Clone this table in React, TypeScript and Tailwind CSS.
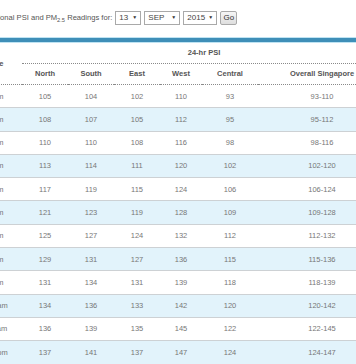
import React from "react";

const rows: [string, number, number, number, number, number][] = [
  ["1am", 105, 104, 102, 110, 93],
  ["2am", 108, 107, 105, 112, 95],
  ["3am", 110, 110, 108, 116, 98],
  ["4am", 113, 114, 111, 120, 102],
  ["5am", 117, 119, 115, 124, 106],
  ["6am", 121, 123, 119, 128, 109],
  ["7am", 125, 127, 124, 132, 112],
  ["8am", 129, 131, 127, 136, 115],
  ["9am", 131, 134, 131, 139, 118],
  ["10am", 134, 136, 133, 142, 120],
  ["11am", 136, 139, 135, 145, 122],
  ["12pm", 137, 141, 137, 147, 124],
];

const cols = "grid grid-cols-[62px_46px_46px_46px_42px_56px_128px]";

function SelectBox({ label, w }: { label: string; w: string }) {
  return (
    <div
      className={`${w} h-[14px] border border-[#a9a9a9] bg-white flex items-center justify-between pl-[3px] pr-[3px] text-[8px] text-[#444]`}
    >
      <span>{label}</span>
      <span className="text-[5px] text-[#333]">▼</span>
    </div>
  );
}

export default function App() {
  return (
    <div className="w-[356px] h-[364px] overflow-hidden bg-white font-['Liberation_Sans',Arial,sans-serif]">
      <div className="ml-[-40px] w-[430px]">
        {/* heading line */}
        <div className="flex items-center pt-[11px] pl-[24.5px] h-[25px] text-[7.6px] text-[#555]">
          <span className="mr-[3px]">
            Regional PSI and PM<sub>2.5</sub> Readings for:
          </span>
          <div className="flex items-center gap-[3px]">
            <SelectBox label="13" w="w-[26px]" />
            <SelectBox label="SEP" w="w-[36px]" />
            <SelectBox label="2015" w="w-[34px]" />
            <div className="h-[14px] w-[17px] border border-[#a9a9a9] rounded-[2px] bg-gradient-to-b from-[#f6f6f6] to-[#dedede] flex items-center justify-center text-[8px] text-[#333]">
              Go
            </div>
          </div>
        </div>

        {/* blue bar */}
        <div className="mt-[12px] border-t border-b border-[#bfe3f2] bg-[#3f8fb8] h-[6px]" />

        {/* header */}
        <div className={`${cols} text-[7.5px] font-bold text-[#555]`}>
          <div className="row-span-2 flex items-center pl-[26px] border-b border-dotted border-[#8a8a8a]">
            Time
          </div>
          <div className="col-span-6 h-[21px] flex items-center justify-center border-b border-dotted border-[#8a8a8a]">
            24-hr PSI
          </div>
          {["North", "South", "East", "West", "Central", "Overall Singapore"].map((h) => (
            <div
              key={h}
              className="h-[21px] flex items-center justify-center border-b border-dotted border-[#8a8a8a]"
            >
              {h}
            </div>
          ))}
        </div>

        {/* rows */}
        {rows.map((r, i) => {
          const [t, n, s, e, w, c] = r;
          const lo = Math.min(n, s, e, w, c);
          const hi = Math.max(n, s, e, w, c);
          return (
            <div
              key={t}
              className={`${cols} h-[23.3px] border-b-[1.4px] border-[#cdd1d4] text-[7.5px] text-[#777] ${
                i % 2 === 1 ? "bg-[#e2f3fb]" : "bg-white"
              }`}
            >
              <div className="flex items-center pl-[29px]">{t}</div>
              <div className="flex items-center justify-center">{n}</div>
              <div className="flex items-center justify-center">{s}</div>
              <div className="flex items-center justify-center">{e}</div>
              <div className="flex items-center justify-center">{w}</div>
              <div className="flex items-center justify-center">{c}</div>
              <div className="flex items-center justify-center">
                {lo}-{hi}
              </div>
            </div>
          );
        })}
      </div>
    </div>
  );
}
